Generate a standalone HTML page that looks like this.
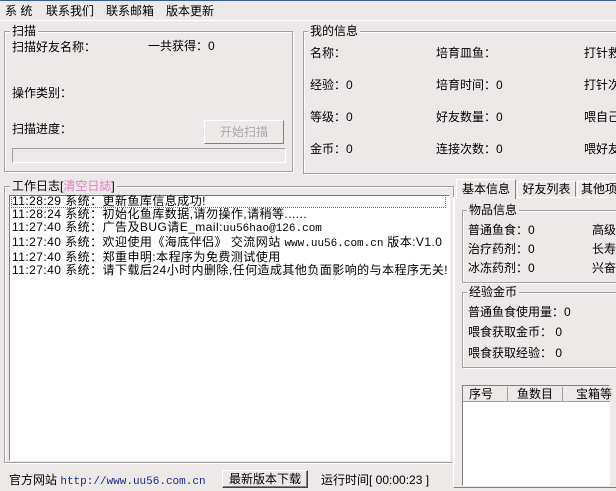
<!DOCTYPE html>
<html><head><meta charset="utf-8"><style>
*{margin:0;padding:0;box-sizing:border-box}
body{width:616px;height:491px;overflow:hidden;background:#ece9e8;font-family:"Liberation Sans","Noto Sans CJK SC","WenQuanYi Zen Hei",sans-serif;font-size:12px;color:#000;position:relative}
.a{position:absolute;white-space:nowrap;line-height:14px}
.g{position:absolute;border:1px solid #a0a0a0;box-shadow:inset 1px 1px 0 #fff,1px 1px 0 #fff}
.lg{position:absolute;background:#ece9e8;padding:0 2px;line-height:14px;white-space:nowrap}
.mono{font-family:"Liberation Mono","Noto Sans CJK SC",monospace}
</style></head><body>
<div style="position:absolute;left:0;top:0;width:616px;height:1px;background:#3a5a9a"></div>
<div class="a" style="left:5px;top:4px">系 统</div>
<div class="a" style="left:46px;top:4px">联系我们</div>
<div class="a" style="left:106px;top:4px">联系邮箱</div>
<div class="a" style="left:166px;top:4px">版本更新</div>
<div style="position:absolute;left:0;top:20px;width:616px;height:1px;background:#fff"></div>

<div class="g" style="left:4px;top:31px;width:289px;height:141px"></div>
<div class="lg" style="left:10px;top:24px">扫描</div>
<div class="a" style="left:12px;top:40px">扫描好友名称：</div>
<div class="a" style="left:148px;top:39px">一共获得：0</div>
<div class="a" style="left:12px;top:86px">操作类别：</div>
<div class="a" style="left:12px;top:122px">扫描进度：</div>
<div style="position:absolute;left:204px;top:120px;width:80px;height:24px;border:1px solid;border-color:#fff #808080 #808080 #fff;color:#a8a8a8;text-align:center;line-height:22px">开始扫描</div>
<div style="position:absolute;left:12px;top:148px;width:274px;height:15px;border:1px solid;border-color:#a0a0a0 #fff #fff #a0a0a0"></div>

<div class="g" style="left:303px;top:31px;width:320px;height:143px"></div>
<div class="lg" style="left:308px;top:24px">我的信息</div>
<div class="a" style="left:310px;top:46px">名称：</div>
<div class="a" style="left:436px;top:46px">培育皿鱼：</div>
<div class="a" style="left:584px;top:46px">打针救</div>
<div class="a" style="left:310px;top:78px">经验：0</div>
<div class="a" style="left:436px;top:78px">培育时间：0</div>
<div class="a" style="left:584px;top:78px">打针次</div>
<div class="a" style="left:310px;top:110px">等级：0</div>
<div class="a" style="left:436px;top:110px">好友数量：0</div>
<div class="a" style="left:584px;top:110px">喂自己</div>
<div class="a" style="left:310px;top:142px">金币：0</div>
<div class="a" style="left:436px;top:142px">连接次数：0</div>
<div class="a" style="left:584px;top:142px">喂好友</div>

<div class="g" style="left:4px;top:186px;width:450px;height:277px"></div>
<div class="lg" style="left:10px;top:179px">工作日志[<span style="color:#e080c0">清空日誌</span>]</div>
<div style="position:absolute;left:9px;top:195px;width:441px;height:266px;background:#fff;border:1px solid;border-color:#808080 #fff #fff #808080"></div>
<div style="position:absolute;left:11px;top:195px;width:435px;height:13px;border:1px dotted #666"></div>
<div class="a" style="left:12px;top:195px;line-height:13px;letter-spacing:0.45px">
<div>11:28:29 系统：更新鱼库信息成功!</div>
<div>11:28:24 系统：初始化鱼库数据,请勿操作,请稍等......</div>
<div>11:27:40 系统：广告及BUG请E_mail:<span class="mono" style="font-size:11px;letter-spacing:0">uu56hao@126.com</span></div>
<div>11:27:40 系统：欢迎使用《海底伴侣》 交流网站 <span class="mono" style="font-size:11px;letter-spacing:0">www.uu56.com.cn</span> 版本:V1.0</div>
<div>11:27:40 系统：郑重申明:本程序为免费测试使用</div>
<div>11:27:40 系统：请下载后24小时内删除,任何造成其他负面影响的与本程序无关!</div>
</div>

<div class="a" style="left:9px;top:473px">官方网站 <span class="mono" style="color:#1a2a8a;font-size:11px">http://www.uu56.com.cn</span></div>
<div style="position:absolute;left:222px;top:470px;width:86px;height:18px;border:1px solid;border-color:#fff #404040 #404040 #fff;text-align:center;line-height:16px;box-shadow:inset -1px -1px 0 #808080">最新版本下载</div>
<div class="a" style="left:321px;top:473px">运行时间[ 00:00:23 ]</div>

<div style="position:absolute;left:453px;top:197px;width:170px;height:291px;border:1px solid;border-color:#fff #808080 #808080 #fff"></div>
<div style="position:absolute;left:456px;top:179px;width:60px;height:20px;background:#ece9e8;border:1px solid;border-color:#fff #808080 transparent #fff;border-bottom:none;text-align:center;line-height:18px">基本信息</div>
<div style="position:absolute;left:517px;top:181px;width:59px;height:16px;border:1px solid;border-color:#fff #808080 transparent #fff;text-align:center;line-height:15px">好友列表</div>
<div style="position:absolute;left:577px;top:181px;width:59px;height:16px;border:1px solid;border-color:#fff #808080 transparent #fff;padding-left:3px;line-height:15px">其他项</div>

<div class="g" style="left:462px;top:210px;width:170px;height:73px"></div>
<div class="lg" style="left:467px;top:203px">物品信息</div>
<div class="a" style="left:468px;top:223px">普通鱼食：0</div><div class="a" style="left:592px;top:223px">高级</div>
<div class="a" style="left:468px;top:242px">治疗药剂：0</div><div class="a" style="left:592px;top:242px">长寿</div>
<div class="a" style="left:468px;top:261px">冰冻药剂：0</div><div class="a" style="left:592px;top:261px">兴奋</div>
<div class="g" style="left:462px;top:292px;width:170px;height:76px"></div>
<div class="lg" style="left:467px;top:285px">经验金币</div>
<div class="a" style="left:468px;top:305px">普通鱼食使用量：0</div>
<div class="a" style="left:468px;top:325px">喂食获取金币： 0</div>
<div class="a" style="left:468px;top:346px">喂食获取经验： 0</div>

<div style="position:absolute;left:462px;top:385px;width:148px;height:101px;background:#fff;border:1px solid;border-color:#808080 #fff #fff #808080"></div>
<div style="position:absolute;left:463px;top:386px;width:147px;height:16px;background:#ece9e8;border-bottom:1px solid #a0a0a0"></div>
<div style="position:absolute;left:507px;top:387px;width:1px;height:14px;background:#a0a0a0"></div>
<div style="position:absolute;left:562px;top:387px;width:1px;height:14px;background:#a0a0a0"></div>
<div class="a" style="left:469px;top:387px">序号</div>
<div class="a" style="left:517px;top:387px">鱼数目</div>
<div class="a" style="left:576px;top:387px">宝箱等</div>
</body></html>
